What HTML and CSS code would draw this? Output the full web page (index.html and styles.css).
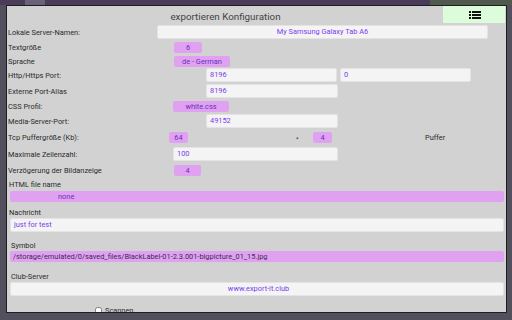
FILE: index.html
```html
<!DOCTYPE html>
<html lang="de">
<head>
    <meta charset="UTF-8">
    <meta name="viewport" content="width=device-width, initial-scale=1.0">
    <title>exportieren Konfiguration</title>
    <link rel="stylesheet" href="styles.css">
</head>
<body>
    <div class="topbar"></div>
    <div class="dialog">
        <div class="header">
            <div class="title">exportieren Konfiguration</div>
            <button class="menu-btn" type="button">
                <svg width="12" height="8" viewBox="0 0 12 8">
                    <rect x="0" y="0" width="2" height="2" fill="#111"/>
                    <rect x="3" y="0" width="9" height="2" fill="#111"/>
                    <rect x="0" y="3" width="2" height="2" fill="#111"/>
                    <rect x="3" y="3" width="9" height="2" fill="#111"/>
                    <rect x="0" y="6" width="2" height="2" fill="#111"/>
                    <rect x="3" y="6" width="9" height="2" fill="#111"/>
                </svg>
            </button>
        </div>

        <div class="row r1">
            <label>Lokale Server-Namen:</label>
            <div class="field center w-name">My Samsung Galaxy Tab A6</div>
        </div>
        <div class="row r2">
            <label>Textgröße</label>
            <div class="pill off-174 w-28">6</div>
        </div>
        <div class="row r3">
            <label>Sprache</label>
            <div class="pill off-174 w-56">de - German</div>
        </div>
        <div class="row r4">
            <label>Http/Https Port:</label>
            <div class="field off-206 w-131">8196</div>
            <div class="field gap-3 w-131">0</div>
        </div>
        <div class="row r5">
            <label>Externe Port-Alias</label>
            <div class="field off-206 w-132">8196</div>
        </div>
        <div class="row r6">
            <label>CSS Profil:</label>
            <div class="pill off-173 w-56">white.css</div>
        </div>
        <div class="row r7">
            <label>Media-Server-Port:</label>
            <div class="field off-206 w-132">49152</div>
        </div>
        <div class="row r8">
            <label>Tcp Puffergröße (Kb):</label>
            <div class="pill off-169 w-19">64</div>
            <span class="times">*</span>
            <div class="pill w-19">4</div>
            <span class="unit">Puffer</span>
        </div>
        <div class="row r9">
            <label>Maximale Zeilenzahl:</label>
            <div class="field off-173 w-165">100</div>
        </div>
        <div class="row r10">
            <label>Verzögerung der Bildanzeige</label>
            <div class="pill off-174 w-27">4</div>
        </div>

        <div class="block-label l-html">HTML file name</div>
        <div class="bar pink"><span class="none">none</span></div>

        <div class="block-label l-msg">Nachricht</div>
        <div class="bar white">just for test</div>

        <div class="block-label l-sym">Symbol</div>
        <div class="bar pink dark">/storage/emulated/0/saved_files/BlackLabel-01-2.3.001-bigpicture_01_15.jpg</div>

        <div class="block-label l-club">Club-Server</div>
        <div class="bar white center">www.export-it.club</div>

        <div class="scan">
            <input type="checkbox" id="scan">
            <label for="scan">Scannen</label>
        </div>
    </div>
</body>
</html>
```

FILE: styles.css
```css
body {
    font-family: Roboto, "Liberation Sans", sans-serif;
    background-color: #52505c;
    margin: 0;
    padding: 0;
    height: 320px;
    overflow: hidden;
}
.topbar {
    height: 5px;
    background: linear-gradient(to right, #4a3c58 0, #4a3c58 25px, #6a6278 25px, #6a6278 45px, #4a3c58 45px, #4a3c58 430px, #4f5a4c 430px);
}
.dialog {
    margin-left: 6px;
    width: 501px;
    height: 308px;
    overflow: hidden;
    background: #d2d2d2;
    border: 1px solid #1e1e22;
    padding: 0 1px;
    box-sizing: border-box;
    font-size: 7.4px;
    color: #2a2a2a;
}
.header {
    display: flex;
    height: 18px;
    align-items: center;
}
.title {
    flex: 1;
    text-align: center;
    font-size: 9.8px;
    color: #444;
    padding-top: 2px;
}
.menu-btn {
    width: 62px;
    height: 17px;
    margin-top: -1px;
    background: #dcfcdc;
    border: none;
    padding: 0 0 0 2px;
    display: flex;
    align-items: center;
    justify-content: center;
}
.row {
    display: flex;
    align-items: center;
}
.row label {
    flex: 0 0 149px;
    white-space: nowrap;
}
.r1 { height: 16px; }
.r2 { height: 14px; }
.r3 { height: 14px; }
.r4 { height: 14px; }
.r5 { height: 18px; }
.r6 { height: 12px; }
.r7 { height: 18px; }
.r8 { height: 14px; }
.r9 { height: 20px; }
.r10 { height: 12px; }

.field {
    height: 14px;
    box-sizing: border-box;
    background: #f4f4f4;
    border: 1px solid #e4e4e4;
    border-radius: 2px;
    color: #7a3cf0;
    line-height: 12px;
    padding-left: 3px;
    white-space: nowrap;
}
.field.center {
    text-align: center;
    padding-left: 0;
}
.pill {
    height: 11px;
    line-height: 11px;
    background: #e0a2f0;
    border-radius: 2px;
    color: #6a2ec0;
    text-align: center;
    white-space: nowrap;
}
.w-name { width: 331px; }
.w-131 { width: 131px; }
.w-132 { width: 132px; }
.w-165 { width: 165px; }
.w-56 { width: 56px; }
.w-28 { width: 28px; }
.w-27 { width: 27px; }
.w-19 { width: 19px; }
.off-174 { margin-left: 17px; }
.off-173 { margin-left: 16px; }
.off-169 { margin-left: 12px; }
.off-206 { margin-left: 49px; }
.gap-3 { margin-left: 3px; }
.times {
    margin-left: 108px;
    width: 17px;
    font-size: 6px;
    padding-top: 3px;
}
.unit {
    margin-left: 93px;
}

.block-label {
    height: 10px;
    line-height: 10px;
    padding-left: 1px;
}
.l-html { margin-top: 3px; height: 12px; line-height: 12px; }
.l-msg { margin-top: 6px; }
.l-sym { margin-top: 9px; padding-left: 3px; }
.l-club { margin-top: 10px; padding-left: 3px; }
.bar {
    margin-left: 2px;
    width: 494px;
    box-sizing: border-box;
    border-radius: 2px;
    white-space: nowrap;
    overflow: hidden;
}
.bar.pink {
    height: 11px;
    line-height: 11px;
    background: #e0a2f0;
    color: #6a2ec0;
    padding-left: 3px;
}
.bar.pink.dark {
    color: #3a2a50;
}
.bar.white {
    height: 14px;
    line-height: 12px;
    background: #f4f4f4;
    border: 1px solid #e4e4e4;
    color: #7a3cf0;
    padding-left: 3px;
}
.bar.center {
    text-align: center;
}
.none {
    margin-left: 45px;
}
.scan {
    display: flex;
    align-items: center;
    margin-top: 10px;
    padding-left: 87px;
}
.scan input {
    width: 7px;
    height: 7px;
    margin: 0 3px 0 0;
}
```
